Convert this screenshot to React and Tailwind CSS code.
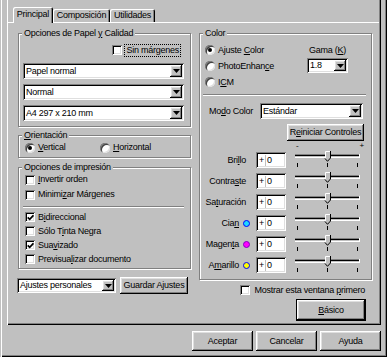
import React from 'react';

const RAISED =
  'shadow-[inset_-1px_-1px_0_#000,inset_1px_1px_0_#fff,inset_-2px_-2px_0_#808080,inset_2px_2px_0_#dfdfdf]';
const SUNKEN =
  'shadow-[inset_1px_1px_0_#808080,inset_-1px_-1px_0_#fff,inset_2px_2px_0_#000,inset_-2px_-2px_0_#dfdfdf]';

const Check = ({ checked }) => (
  <span className={`flex h-[10px] w-[10px] shrink-0 items-center justify-center bg-white ${SUNKEN}`}>
    {checked && (
      <svg width="7" height="7" viewBox="0 0 7 7">
        <path d="M0.7 3.3 L2.7 5.3 L6.4 1.3" fill="none" stroke="#000" strokeWidth="1.7" />
      </svg>
    )}
  </span>
);

const Radio = ({ checked }) => (
  <span className="flex h-[10px] w-[10px] shrink-0 items-center justify-center rounded-full bg-white shadow-[inset_1px_1px_0_#808080,inset_2px_2px_0_#404040,inset_-1px_-1px_0_#dfdfdf]">
    {checked && <span className="h-[4px] w-[4px] rounded-full bg-black" />}
  </span>
);

const Select = ({ value, className = '' }) => (
  <div className={`flex shrink-0 items-stretch bg-white p-[2px] ${SUNKEN} ${className}`}>
    <span className="flex flex-1 items-center overflow-hidden whitespace-nowrap pl-[1px]">{value}</span>
    <span className={`flex w-[12px] items-center justify-center bg-[#c0c0c0] ${RAISED}`}>
      <svg width="7" height="4" viewBox="0 0 7 4">
        <path d="M0 0h7L3.5 4z" fill="#000" />
      </svg>
    </span>
  </div>
);

const Button = ({ children, className = '' }) => (
  <div className={`flex shrink-0 items-center justify-center whitespace-nowrap bg-[#c0c0c0] ${RAISED} ${className}`}>
    {children}
  </div>
);

const Group = ({ title, className = '', children }) => (
  <div className={`relative flex flex-col border border-[#808080] shadow-[inset_1px_1px_0_#fff,1px_1px_0_#fff] ${className}`}>
    <span className="absolute left-[3px] top-[-6px] bg-[#c0c0c0] px-[2px] leading-[11px]">{title}</span>
    {children}
  </div>
);

const Separator = ({ className = '' }) => (
  <div className={`h-[2px] border-t border-b border-t-[#808080] border-b-white ${className}`} />
);

const CheckRow = ({ checked, children, className = '' }) => (
  <div className={`flex items-center pl-[6px] ${className}`}>
    <Check checked={checked} />
    <span className="ml-[3px]">{children}</span>
  </div>
);

const Slider = () => (
  <svg width="67" height="21" viewBox="0 0 67 21" className="ml-[9px] shrink-0">
    <rect x="0" y="3" width="64" height="1" fill="#808080" />
    <rect x="0" y="4" width="64" height="1" fill="#000" />
    <rect x="0" y="6" width="65" height="1" fill="#fff" />
    <rect x="64" y="3" width="1" height="4" fill="#fff" />
    <polygon points="30,0 35,0 35,7 32.5,10 30,7" fill="#c0c0c0" />
    <polyline points="30.5,7 30.5,0.5 35,0.5" fill="none" stroke="#fff" strokeWidth="1" />
    <polyline points="35.5,0 35.5,7 32.5,10.3 30,7.5" fill="none" stroke="#000" strokeWidth="1" />
    <rect x="2" y="12" width="1" height="4" fill="#000" />
    <rect x="32" y="12" width="1" height="4" fill="#000" />
    <rect x="62" y="12" width="1" height="4" fill="#000" />
  </svg>
);

const SliderRow = ({ label, dot }) => (
  <div className="flex h-[21px] items-start">
    <div className={`mt-[1px] flex h-[16px] w-[51px] items-center justify-end ${dot ? 'pr-[1px]' : 'pr-[5px]'}`}>
      <span>{label}</span>
      {dot && <span className={`ml-[4px] h-[7px] w-[7px] rounded-full border ${dot}`} />}
    </div>
    <div className={`ml-[5px] mt-[1px] flex h-[16px] w-[30px] items-center bg-white pl-[3px] ${SUNKEN}`}>
      <span>+</span>
      <span className="mx-[1px] h-[11px] w-px bg-[#c0c0c0]" />
      <span>0</span>
    </div>
    <Slider />
  </div>
);

const Tab = ({ children, selected, className = '' }) => (
  <div
    className={`flex shrink-0 items-center justify-center rounded-t-[2px] shadow-[inset_1px_1px_0_#fff,inset_-1px_0_0_#000,inset_-2px_0_0_#808080] ${
      selected ? 'h-[16px] pb-[2px]' : 'h-[14px] border-b border-white'
    } ${className}`}
  >
    {children}
  </div>
);

export default function App() {
  return (
    <div className="flex h-[357px] w-[387px] flex-col bg-[#c0c0c0] font-['Liberation_Sans',Arial,sans-serif] text-[9px] leading-none tracking-[-0.25px] text-black shadow-[inset_1px_0_0_#c0c0c0,inset_2px_0_0_#fff,inset_-1px_-1px_0_#000,inset_-2px_-2px_0_#808080]">
      <div className="ml-[7px] flex h-[325px] w-[374px] flex-col shadow-[inset_1px_0_0_#fff,inset_-1px_-1px_0_#000,inset_-2px_-2px_0_#808080]">
        {/* tabs */}
        <div className="mt-[7px] flex h-[16px] items-end">
          <div className="h-full w-[6px] border-b border-white" />
          <Tab selected className="w-[40px]">Principal</Tab>
          <Tab className="w-[57px]">Composición</Tab>
          <Tab className="w-[45px]">Utilidades</Tab>
          <div className="mr-[2px] h-full flex-1 border-b border-white" />
        </div>

        <div className="flex flex-1 pl-[11px] pt-[10px]">
          {/* left column */}
          <div className="flex w-[173px] flex-col">
            <Group
              className="h-[94px]"
              title={
                <>
                  Opciones de Papel <u>y</u> Calidad
                </>
              }
            >
              <div className="mt-[10px] flex h-[12px] items-center justify-end pr-[9px]">
                <Check />
                <span className="ml-[2px] border border-dotted border-black px-[1px] py-[1px]">Sin márgenes</span>
              </div>
              <Select value="Papel normal" className="ml-[4px] mt-[7px] h-[16px] w-[161px]" />
              <Select value="Normal" className="ml-[4px] mt-[5px] h-[16px] w-[161px]" />
              <Select value="A4 297 x 210 mm" className="ml-[4px] mt-[5px] h-[16px] w-[161px]" />
            </Group>

            <Group
              className="mt-[8px] h-[23px]"
              title={
                <>
                  <u>O</u>rientación
                </>
              }
            >
              <div className="mt-[6px] flex h-[11px] items-center pl-[6px]">
                <div className="flex w-[75px] items-center">
                  <Radio checked />
                  <span className="ml-[3px]">
                    <u>V</u>ertical
                  </span>
                </div>
                <Radio />
                <span className="ml-[3px]">
                  <u>H</u>orizontal
                </span>
              </div>
            </Group>

            <Group className="mt-[9px] h-[102px]" title="Opciones de impresión">
              <CheckRow className="mt-[4px] h-[15px]">
                <u>I</u>nvertir orden
              </CheckRow>
              <CheckRow className="h-[15px]">
                Minimi<u>z</u>ar Márgenes
              </CheckRow>
              <Separator className="ml-[4px] mt-[4px] w-[161px]" />
              <CheckRow checked className="mt-[2px] h-[14px]">
                B<u>i</u>direccional
              </CheckRow>
              <CheckRow className="h-[14px]">
                Sólo T<u>i</u>nta Negra
              </CheckRow>
              <CheckRow checked className="h-[14px]">
                Sua<u>v</u>izado
              </CheckRow>
              <CheckRow className="h-[14px]">
                Previsua<u>l</u>izar documento
              </CheckRow>
            </Group>

            <div className="ml-[-1px] mt-[8px] flex h-[17px] items-center">
              <Select value="Ajustes personales" className="h-[15px] w-[99px]" />
              <Button className="ml-[4px] h-[17px] w-[68px]">Guardar Ajustes</Button>
            </div>
          </div>

          {/* right column */}
          <div className="ml-[8px] flex w-[173px] flex-col">
            <Group className="h-[247px]" title="Color">
              <div className="mt-[8px] flex">
                <div className="ml-[5px] flex flex-col">
                  <div className="flex h-[16px] items-center">
                    <Radio checked />
                    <span className="ml-[3px]">
                      Ajuste <u>C</u>olor
                    </span>
                  </div>
                  <div className="flex h-[16px] items-center">
                    <Radio />
                    <span className="ml-[3px]">
                      PhotoEnhan<u>c</u>e
                    </span>
                  </div>
                  <div className="flex h-[16px] items-center">
                    <Radio />
                    <span className="ml-[3px]">
                      I<u>C</u>M
                    </span>
                  </div>
                </div>
                <div className="ml-auto mr-[23px] flex w-[41px] flex-col">
                  <div className="flex h-[16px] items-center justify-center">
                    Gama (<u>K</u>)
                  </div>
                  <Select value="1.8" className="h-[15px] w-[41px]" />
                </div>
              </div>

              <Separator className="ml-[3px] mt-[4px] w-[163px]" />

              <div className="mt-[7px] flex h-[16px] items-center">
                <span className="w-[60px] pl-[9px]">
                  Mo<u>d</u>o Color
                </span>
                <Select value="Estándar" className="h-[16px] w-[103px]" />
              </div>

              <Button className="ml-[87px] mt-[5px] h-[17px] w-[77px]">
                <span>
                  R<u>e</u>iniciar Controles
                </span>
              </Button>

              <div className="ml-[96px] flex h-[10px] w-[68px] items-center justify-between text-[8px]">
                <span>-</span>
                <span>+</span>
              </div>

              <SliderRow
                label={
                  <>
                    Bri<u>l</u>lo
                  </>
                }
              />
              <SliderRow
                label={
                  <>
                    Contra<u>s</u>te
                  </>
                }
              />
              <SliderRow
                label={
                  <>
                    Sa<u>t</u>uración
                  </>
                }
              />
              <SliderRow
                label={
                  <>
                    Cia<u>n</u>
                  </>
                }
                dot="border-[#0000ff] bg-[#20d8ff]"
              />
              <SliderRow
                label={
                  <>
                    Magen<u>t</u>a
                  </>
                }
                dot="border-[#8000c0] bg-[#ff00ff]"
              />
              <SliderRow
                label={
                  <>
                    A<u>m</u>arillo
                  </>
                }
                dot="border-[#0000ff] bg-[#ffff00]"
              />
            </Group>

            <div className="mt-[5px] flex h-[10px] items-center justify-end pr-[7px]">
              <Check />
              <span className="ml-[4px]">
                Mostrar esta ventana <u>p</u>rimero
              </span>
            </div>

            <Button className="mr-[7px] mt-[5px] h-[20px] w-[68px] self-end outline outline-1 outline-black">
              <span>
                <u>B</u>ásico
              </span>
            </Button>
          </div>
        </div>
      </div>

      <div className="mt-[6px] flex justify-end gap-[3px] pr-[6px]">
        <Button className="h-[20px] w-[61px]">Aceptar</Button>
        <Button className="h-[20px] w-[61px]">Cancelar</Button>
        <Button className="h-[20px] w-[61px]">Ayuda</Button>
      </div>
    </div>
  );
}
